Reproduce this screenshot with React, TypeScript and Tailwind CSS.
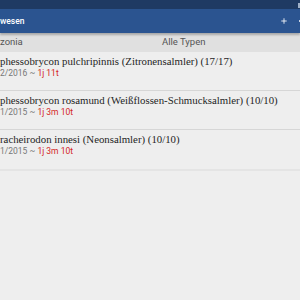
import React from 'react';
import { Plus } from 'lucide-react';

interface Entry {
  title: string;
  date: string;
  age: string;
}

const entries: Entry[] = [
  { title: 'phessobrycon pulchripinnis (Zitronensalmler) (17/17)', date: '2/2016', age: '1j 11t' },
  { title: 'phessobrycon rosamund (Weißflossen-Schmucksalmler) (10/10)', date: '1/2015', age: '1j 3m 10t' },
  { title: 'racheirodon innesi (Neonsalmler) (10/10)', date: '1/2015', age: '1j 3m 10t' },
];

const narrow = { fontFamily: '"Liberation Sans Narrow", Roboto, sans-serif' };

export default function App() {
  return (
    <div className="w-[300px] h-[300px] overflow-hidden bg-[#eeeeee] flex flex-col">
      {/* status bar */}
      <div className="h-[9px] bg-[#1f3a63] flex justify-end">
        <div className="w-[2px] h-[5px] mt-[3px] bg-[#9fb0c8]" />
      </div>

      {/* app bar */}
      <div className="h-[24px] bg-[#2b5490] flex items-center justify-between shadow-[0_2px_2px_rgba(0,0,0,0.25)] relative z-10">
        <span className="text-white text-[8.5px] font-medium" style={{ fontFamily: 'Roboto, sans-serif' }}>
          wesen
        </span>
        <div className="flex items-center">
          <Plus className="w-[8px] h-[8px] text-white" strokeWidth={2.5} />
          <div className="w-[1px] h-[2px] bg-[#c9d4e4] ml-[11px]" />
        </div>
      </div>

      {/* filter row */}
      <div className="h-[19px] bg-[#e0e0e0] flex items-center text-[9.5px] text-[#555555]" style={narrow}>
        <span className="w-[162px]">zonia</span>
        <span>Alle Typen</span>
      </div>

      {/* list */}
      <div className="flex flex-col">
        {entries.map((e, i) => (
          <div
            key={i}
            className={`h-[39px] pt-[3px] border-b ${i === entries.length - 1 ? 'border-b-2 border-[#e4e4e4] h-[41px]' : 'border-[#d6d6d6]'}`}
          >
            <div className="text-[10.8px] leading-[13px] text-[#1e1e1e]" style={{ fontFamily: '"Liberation Serif", serif' }}>
              {e.title}
            </div>
            <div className="text-[8.5px] leading-[11px] text-[#777777]" style={narrow}>
              {e.date} ~ <span className="text-[#d42424]">{e.age}</span>
            </div>
          </div>
        ))}
      </div>
    </div>
  );
}
